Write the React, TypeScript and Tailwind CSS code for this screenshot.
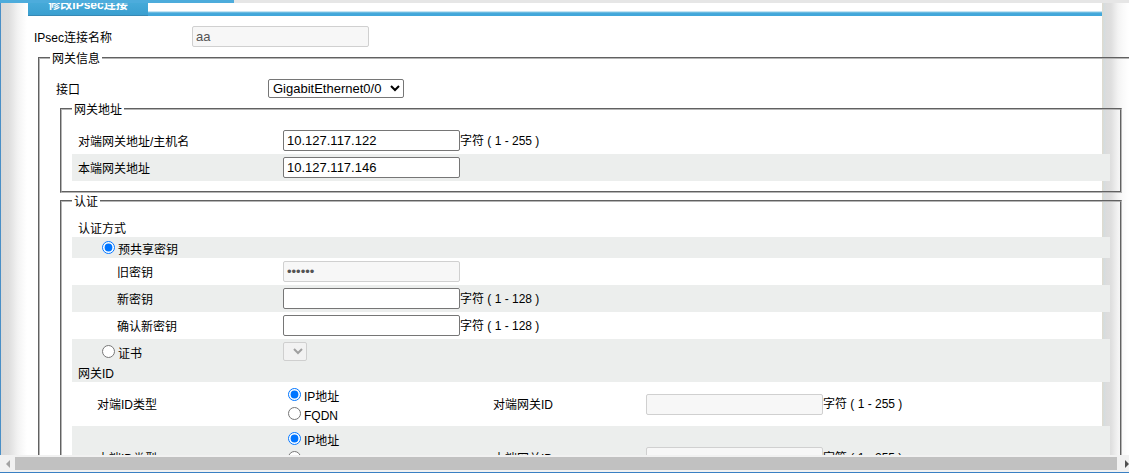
import { useState, type InputHTMLAttributes, type ReactNode } from 'react';
import clsx from 'clsx';

function TextField({ className, ...props }: InputHTMLAttributes<HTMLInputElement>) {
  return (
    <input
      className={clsx(
        'h-[21px] w-[177px] shrink-0 rounded-[2px] border border-[#767676] bg-white px-[3px] text-[13px]',
        'disabled:border-[#d0d0d0] disabled:bg-[#f7f7f7] disabled:text-[#545454]',
        className
      )}
      {...props}
    />
  );
}

type RadioProps = {
  name: string;
  label: string;
  checked: boolean;
  onSelect: () => void;
};

function Radio({ name, label, checked, onSelect }: RadioProps) {
  return (
    <label className="flex h-[19px] items-center gap-[3px]">
      <input type="radio" name={name} checked={checked} onChange={onSelect} className="mb-[2px] size-[13px]" />
      <span className="pt-[2px]">{label}</span>
    </label>
  );
}

function Group({ title, className, children }: { title: string; className?: string; children: ReactNode }) {
  return (
    <fieldset className={clsx('min-w-0 border-2 border-[#b5b5b5] [border-style:groove] p-[10px]', className)}>
      <legend className="px-[2px] pt-[2px] leading-[14px]">{title}</legend>
      {children}
    </fieldset>
  );
}

function Hint({ children }: { children: ReactNode }) {
  return <span className="whitespace-nowrap">{children}</span>;
}

type FieldRowProps = {
  id: string;
  label: string;
  hint?: string;
  shaded?: boolean;
  indent?: boolean;
  type?: string;
  defaultValue?: string;
  disabled?: boolean;
};

function FieldRow({ id, label, hint, shaded, indent, ...input }: FieldRowProps) {
  return (
    <div className={clsx('flex h-[27px] items-center', shaded && 'bg-[#eceeed]')}>
      <label htmlFor={id} className={clsx('w-[211px] shrink-0 pt-[2px]', indent ? 'pl-[45px]' : 'pl-[6px]')}>
        {label}
      </label>
      <TextField id={id} {...input} />
      {hint && <Hint>{hint}</Hint>}
    </div>
  );
}

type IdRowProps = {
  name: string;
  typeLabel: string;
  idLabel: string;
  className: string;
};

function IdRow({ name, typeLabel, idLabel, className }: IdRowProps) {
  const [idType, setIdType] = useState('ip');

  return (
    <div className={clsx('flex items-center', className)}>
      <span className="w-[216px] shrink-0 pt-[2px] pl-[25px]">{typeLabel}</span>
      <div className="w-[205px] shrink-0 self-start pt-[4px]" role="radiogroup" aria-label={typeLabel}>
        <Radio name={name} label="IP地址" checked={idType === 'ip'} onSelect={() => setIdType('ip')} />
        <Radio name={name} label="FQDN" checked={idType === 'fqdn'} onSelect={() => setIdType('fqdn')} />
      </div>
      <label htmlFor={`${name}-value`} className="w-[153px] shrink-0 pt-[2px]">
        {idLabel}
      </label>
      <TextField id={`${name}-value`} disabled={idType === 'ip'} />
      <Hint>字符 ( 1 - 255 )</Hint>
    </div>
  );
}

function ScrollBar() {
  return (
    <div className="flex h-[17px] shrink-0 items-center bg-[#f1f1f1]">
      <button type="button" aria-label="向左滚动" className="flex w-[15px] shrink-0 justify-center">
        <svg width="4" height="8" viewBox="0 0 4 8" fill="#a3a3a3">
          <path d="M4 0v8L0 4z" />
        </svg>
      </button>
      <div className="h-[13px] flex-1 bg-[#c1c1c1]" />
      <button type="button" aria-label="向右滚动" className="flex w-[12px] shrink-0 justify-end">
        <svg width="4" height="8" viewBox="0 0 4 8" fill="#505050">
          <path d="M0 0v8l4-4z" />
        </svg>
      </button>
    </div>
  );
}

export default function App() {
  const [method, setMethod] = useState('psk');

  return (
    <div className="flex h-screen flex-col overflow-hidden bg-white pb-px font-['Liberation_Sans','Noto_Sans_CJK_SC',sans-serif] text-[12px] leading-[18px] text-black">
      {/* loading bar */}
      <div className="h-[3px] shrink-0 bg-[#e6e6e6]">
        <div className="h-full w-[234px] bg-[#4dacdc]" />
      </div>

      <main className="min-h-0 flex-1 overflow-hidden border-l border-[#4a8fc6] bg-[linear-gradient(to_right,#d9d9d9_0,#dedede_8px,#f3f3f3_17px,#fafafa_22px,#fff_26px,#fff_calc(100%-27px),#dedbd0_calc(100%-27px),#dedbd0_calc(100%-26px),#d3dde1_calc(100%-25px),#dcdcdc_calc(100%-23px),#dfdfdf_calc(100%-18px),#f3f3f3_calc(100%-11px),#fafafa_calc(100%-6px),#fff_100%)] pl-[27px]">
        <div className="mr-[27px] flex h-[13px] items-end overflow-hidden">
          <h1 className="h-[23px] w-[120px] shrink-0 border-b border-[#3789b4] bg-linear-to-b from-[#4fb3e0] to-[#3a9fd0] text-center leading-[25px] font-bold text-white">
            修改IPsec连接
          </h1>
          <div className="h-[5px] flex-1 border-t border-[#c5e4f3] bg-linear-to-b from-[#7cc3e4] to-[#42a7da] to-40%" />
        </div>

        <form className="pt-[7px]">
          <div className="flex h-[27px] items-center">
            <label htmlFor="conn-name" className="w-[164px] shrink-0 pt-[2px] pl-[6px]">
              IPsec连接名称
            </label>
            <TextField id="conn-name" defaultValue="aa" disabled />
          </div>

          <Group title="网关信息" className="-mr-4 ml-[10px]">
            <div className="flex h-[25px] items-center">
              <label htmlFor="iface" className="w-[218px] shrink-0 pt-[2px] pl-[6px]">
                接口
              </label>
              <select id="iface" className="h-[19px] w-[136px] rounded-[2px] border border-[#767676] bg-white text-[13px] leading-4">
                <option>GigabitEthernet0/0</option>
              </select>
            </div>

            <div className="mr-[11px] ml-[10px]">
              <Group title="网关地址">
                <FieldRow id="peer-addr" label="对端网关地址/主机名" defaultValue="10.127.117.122" hint="字符 ( 1 - 255 )" />
                <FieldRow id="local-addr" label="本端网关地址" defaultValue="10.127.117.146" shaded />
              </Group>

              <Group title="认证">
                <div className="h-[18px] pt-px pl-[6px]">认证方式</div>
                <div className="flex h-[21px] items-center bg-[#eceeed] pt-[2px] pl-[30px]">
                  <Radio name="method" label="预共享密钥" checked={method === 'psk'} onSelect={() => setMethod('psk')} />
                </div>
                <FieldRow id="old-key" type="password" label="旧密钥" defaultValue="secret" indent disabled />
                <FieldRow id="new-key" type="password" label="新密钥" hint="字符 ( 1 - 128 )" indent shaded />
                <FieldRow id="confirm-key" type="password" label="确认新密钥" hint="字符 ( 1 - 128 )" indent />
                <div className="flex h-[25px] items-center bg-[#eceeed]">
                  <div className="w-[211px] shrink-0 pt-[2px] pl-[30px]">
                    <Radio name="method" label="证书" checked={method === 'cert'} onSelect={() => setMethod('cert')} />
                  </div>
                  <select
                    aria-label="证书"
                    disabled={method !== 'cert'}
                    className="h-[19px] w-[24px] rounded-[2px] border border-[#767676] bg-white text-[13px] disabled:border-[#cfcfcf] disabled:bg-[#f2f2f2] disabled:text-[#a0a0a0]"
                  />
                </div>
                <div className="h-[18px] bg-[#eceeed] pt-px pl-[6px]">网关ID</div>
                <IdRow name="peer-id" typeLabel="对端ID类型" idLabel="对端网关ID" className="h-[44px]" />
                <IdRow name="local-id" typeLabel="本端ID类型" idLabel="本端网关ID" className="h-[63px] bg-[#eceeed]" />
              </Group>
            </div>
          </Group>
        </form>
      </main>

      <ScrollBar />
      <div className="h-px shrink-0 bg-[#3a80c3]" />
    </div>
  );
}
